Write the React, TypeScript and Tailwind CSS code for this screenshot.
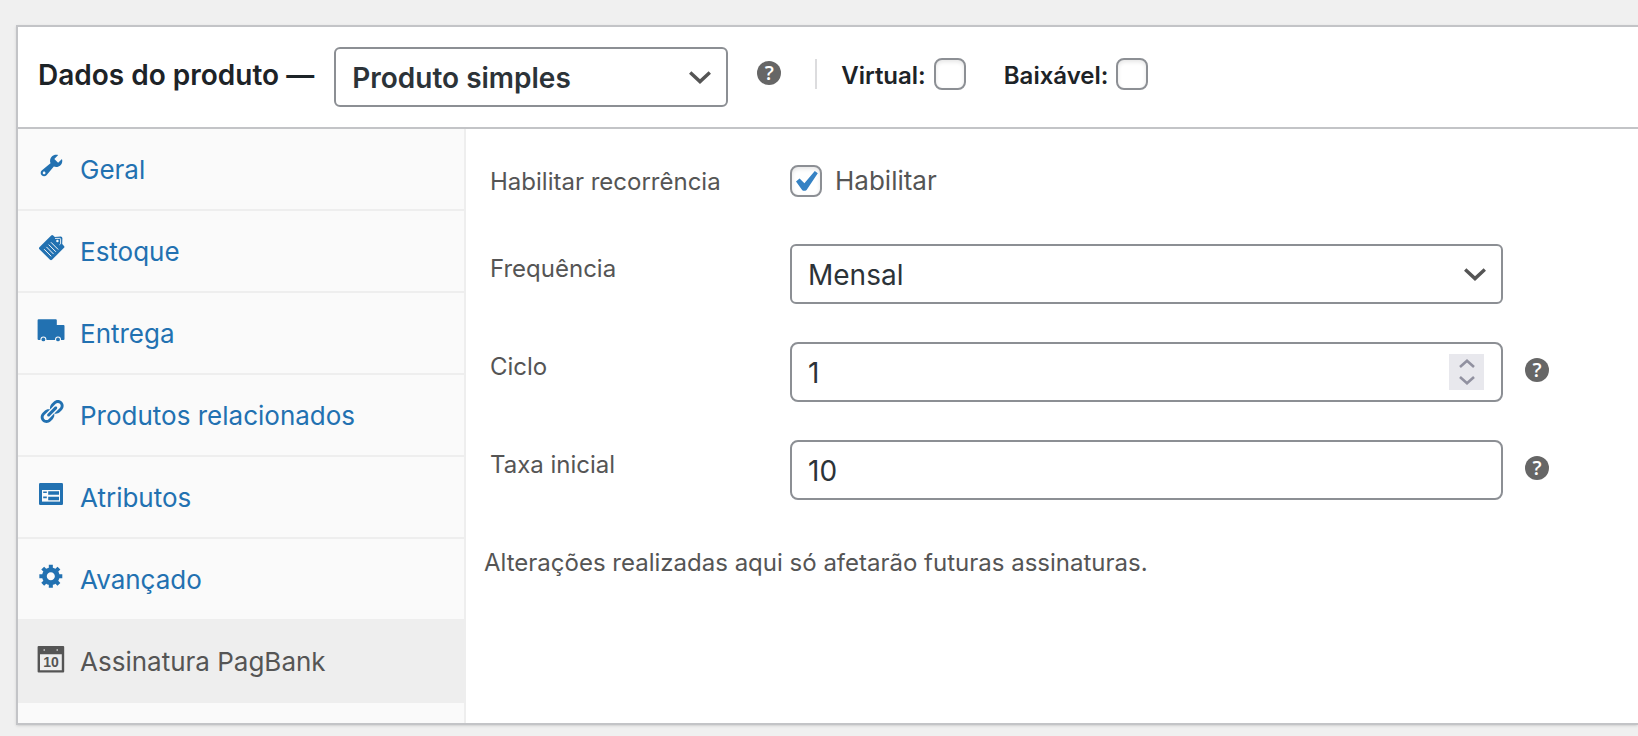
import React, { useState } from "react";

const icons: Record<string, React.ReactNode> = {
    wrench: (
        <path
            transform="scale(1.35)"
            d="M16.68 9.77c-1.34 1.34-3.3 1.67-4.95.99l-5.41 6.52c-.99.99-2.59.99-3.58 0s-.99-2.59 0-3.57l6.52-5.42c-.68-1.65-.35-3.61.99-4.95 1.28-1.28 3.12-1.62 4.72-1.06l-2.89 2.89 2.82 2.82 2.86-2.87c.53 1.58.18 3.39-1.08 4.65zM3.81 16.21c.4.39 1.04.39 1.43 0 .4-.4.4-1.04 0-1.43-.39-.4-1.03-.4-1.43 0-.39.39-.39 1.03 0 1.43z"
        />
    ),
    tag: (
        <>
            <path d="M1.4 13.2 13.2 1.4q1-.9 2 0l1.6 1.5L22.6 2.4q1.8 0 1.8 1.8l-.2 5.8 1.8 2q.9.9 0 1.8L14 25.8q-1 .9-2 0L1.4 15.2q-.9-1 0-2z" />
            <path d="M17 4.4h4.8q.8 0 .8.8v4.6l-1.2 1" fill="none" stroke="#fafafa" strokeWidth=".9" />
            <circle cx="19.4" cy="7" r="1.2" fill="#fafafa" />
            <path
                d="m13 8.3 7.2 7.2M10.7 10.6l7.2 7.2M8.4 12.9l7.2 7.2M6.1 15.2l7.2 7.2"
                fill="none"
                stroke="#fafafa"
                strokeWidth="1"
            />
        </>
    ),
    truck: (
        <>
            <path d="M-.4 4.2q0-1 1-1h17.2q1 0 1 1V9h6.8q.9 0 .9 1v13q0 1-1 1H.6q-1 0-1-1z" />
            <circle cx="5.4" cy="23.4" r="3" fill="#fafafa" />
            <circle cx="20" cy="23.4" r="3" fill="#fafafa" />
            <circle cx="5.4" cy="23.4" r="1.9" />
            <circle cx="20" cy="23.4" r="1.9" />
        </>
    ),
    link: (
        <path
            transform="scale(1.35)"
            d="M17.74 2.76c1.68 1.69 1.68 4.41 0 6.1l-1.53 1.52c-1.12 1.12-2.7 1.47-4.14 1.09l2.62-2.61.76-.77.76-.76c.84-.84.84-2.2 0-3.04-.84-.85-2.2-.85-3.04 0l-.77.76-3.38 3.38c-.37-1.44-.02-3.02 1.1-4.14l1.52-1.53c1.69-1.68 4.42-1.68 6.1 0zM8.59 13.43l5.34-5.34c.42-.42.42-1.1 0-1.52-.44-.43-1.13-.39-1.53 0l-5.33 5.34c-.42.42-.42 1.1 0 1.52.44.43 1.13.39 1.52 0zm-.76 2.29l4.14-4.15c.38 1.44.03 3.02-1.09 4.14l-1.52 1.53c-1.69 1.68-4.41 1.68-6.1 0-1.68-1.68-1.68-4.42 0-6.1l1.53-1.52c1.12-1.12 2.7-1.47 4.14-1.1l-4.14 4.15c-.85.84-.85 2.2 0 3.05.84.84 2.2.84 3.04 0z"
        />
    ),
    list: (
        <>
            <rect x="1" y="3" width="24" height="22" rx="1.2" />
            <rect x="4" y="10" width="18" height="11.6" fill="#fafafa" />
            <path d="M5.2 11.4h3.6v1.6H5.2zM5.2 16.6h3.6v1.6H5.2zM10.2 11.2h10.8v3.6H10.2zM10.2 16.8h10.8v3.4H10.2z" />
        </>
    ),
    gear: (
        <path
            transform="scale(1.35)"
            d="M18 12h-2.18c-.17.7-.44 1.35-.81 1.93l1.54 1.54-2.1 2.1-1.54-1.54c-.58.36-1.23.63-1.91.79V19H8v-2.18c-.68-.16-1.33-.43-1.91-.79l-1.54 1.54-2.12-2.12 1.54-1.54c-.36-.58-.63-1.23-.79-1.91H1V9.03h2.17c.16-.7.44-1.35.8-1.94L2.43 5.55l2.1-2.1 1.54 1.54c.58-.37 1.24-.64 1.93-.81V2h3v2.18c.68.16 1.33.43 1.91.79l1.54-1.54 2.12 2.12-1.54 1.54c.36.59.64 1.24.8 1.94H18V12zm-8.5 1.5c1.66 0 3-1.34 3-3s-1.34-3-3-3-3 1.34-3 3 1.34 3 3 3z"
        />
    ),
    calendar: (
        <>
            <path fillRule="evenodd" d="M-.4 3q0-1 1-1h24.6q1 0 1 1v24.4q0 1-1 1H.6q-1 0-1-1zM2 10.2v16h21.8v-16z" />
            <circle cx="6.2" cy="6" r=".8" fill="#eee" />
            <circle cx="19.2" cy="6" r=".8" fill="#eee" />
            <text x="13" y="23.2" textAnchor="middle" fontSize="14" fontWeight="700" fontFamily="Liberation Sans, sans-serif">
                10
            </text>
        </>
    ),
};

const tabs = [
    { label: "Geral", icon: "wrench" },
    { label: "Estoque", icon: "tag" },
    { label: "Entrega", icon: "truck" },
    { label: "Produtos relacionados", icon: "link" },
    { label: "Atributos", icon: "list" },
    { label: "Avançado", icon: "gear" },
    { label: "Assinatura PagBank", icon: "calendar" },
];

const fieldClass =
    "block w-full h-[60px] appearance-none border-2 border-[#8c8f94] bg-white px-4 pt-0.5 text-[28px] text-[#2c3338] [appearance:textfield] focus:outline-none focus:border-[#2271b1]";

function Help({ text }: { text: string }) {
    return (
        <button
            type="button"
            aria-label={text}
            className="flex items-center justify-center shrink-0 size-6 rounded-full bg-[#666] text-white text-xl leading-6 font-['Open_Sans',sans-serif] font-semibold"
        >
            ?
        </button>
    );
}

function Chevron() {
    return (
        <svg viewBox="0 0 22 13" className="absolute right-[17px] top-6 w-[22px] h-[13px] pointer-events-none" fill="none" stroke="#555" strokeWidth="3.4">
            <path d="M1.2 1.4 11 10.6l9.8-9.2" />
        </svg>
    );
}

function Checkbox({ id, checked, onChange }: { id: string; checked: boolean; onChange: (v: boolean) => void }) {
    return (
        <span className="relative block size-8 shrink-0">
            <input
                id={id}
                type="checkbox"
                checked={checked}
                onChange={(e) => onChange(e.target.checked)}
                className="block size-8 appearance-none rounded-lg border-2 border-[#8c8f94] bg-white shadow-[inset_0_2px_4px_rgba(0,0,0,0.1)]"
            />
            {checked && (
                <svg viewBox="0 0 32 32" className="absolute inset-0 pointer-events-none" fill="#3582c4">
                    <path d="m24.8 6 3 2.2L16.6 25q-.6.8-1.4.8h-1.8q-.8 0-1.3-.8L6 16.4 9.6 13.6l4.8 4.6z" />
                </svg>
            )}
        </span>
    );
}

function Field({ id, label, help, children }: { id: string; label: string; help?: string; children: React.ReactNode }) {
    return (
        <div className="flex items-start">
            <label htmlFor={id} className="w-[300px] shrink-0 pt-[9px] text-2xl">
                {label}
            </label>
            <div className="relative flex-1">{children}</div>
            <div className="w-6 ml-[22px] pt-4">{help && <Help text={help} />}</div>
        </div>
    );
}

export default function App() {
    const [active, setActive] = useState("Assinatura PagBank");
    const [type, setType] = useState("Produto simples");
    const [virtual, setVirtual] = useState(false);
    const [download, setDownload] = useState(false);
    const [enabled, setEnabled] = useState(true);
    const [frequency, setFrequency] = useState("Mensal");
    const [cycle, setCycle] = useState(1);
    const [fee, setFee] = useState("10");

    return (
        <div className="min-h-screen overflow-hidden bg-[#f0f0f0] pt-[25px] pl-4 font-[Inter,sans-serif] text-[#555]">
            <div className="border-2 border-r-0 border-[#c3c4c7] bg-white shadow-sm">
                <div className="flex items-center h-[102px] pl-5 border-b-2 border-[#c3c4c7] text-[#1d2327] font-semibold">
                    <h2 className="pb-1 text-[28px] whitespace-nowrap">
                        <label htmlFor="type">Dados do produto —</label>
                    </h2>
                    <div className="relative w-[394px] ml-5 shrink-0">
                        <select id="type" value={type} onChange={(e) => setType(e.target.value)} className={`${fieldClass} rounded-md`}>
                            <option>Produto simples</option>
                            <option>Produto agrupado</option>
                            <option>Produto variável</option>
                        </select>
                        <Chevron />
                    </div>
                    <div className="ml-[29px] mb-2">
                        <Help text="Tipo do produto" />
                    </div>
                    <div className="flex items-center mb-1.5 ml-[34px] text-2xl">
                        <span className="w-0.5 h-[30px] mr-6 bg-[#dcdcde]" />
                        <label htmlFor="virtual" className="pt-1 mr-2">Virtual:</label>
                        <Checkbox id="virtual" checked={virtual} onChange={setVirtual} />
                        <label htmlFor="download" className="pt-1 ml-[38px] mr-2">Baixável:</label>
                        <Checkbox id="download" checked={download} onChange={setDownload} />
                    </div>
                </div>

                <div className="flex">
                    <ul className="w-[448px] shrink-0 pb-5 border-r-2 border-[#eee] bg-[#fafafa]">
                        {tabs.map((tab) => (
                            <li key={tab.label}>
                                <a
                                    href="#"
                                    onClick={(e) => {
                                        e.preventDefault();
                                        setActive(tab.label);
                                    }}
                                    className={`flex items-center h-[82px] pl-5 gap-3.5 border-b-2 border-[#eee] text-[26px] ${
                                        active === tab.label ? "bg-[#eee] text-[#555]" : "text-[#2271b1]"
                                    }`}
                                >
                                    <svg viewBox="0 0 28 28" className="size-7 mb-1.5 overflow-visible" fill="currentColor">
                                        {icons[tab.icon]}
                                    </svg>
                                    {tab.label}
                                </a>
                            </li>
                        ))}
                    </ul>

                    <form className="flex-1 pt-[35px] pl-6 pr-[89px]" onSubmit={(e) => e.preventDefault()}>
                        <div className="flex items-center mb-[45px] text-2xl">
                            <label htmlFor="enabled" className="w-[300px] shrink-0 pt-0.5">Habilitar recorrência</label>
                            <Checkbox id="enabled" checked={enabled} onChange={setEnabled} />
                            <label htmlFor="enabled" className="ml-[13px] text-[26px]">Habilitar</label>
                        </div>
                        <div className="flex flex-col gap-[38px]">
                            <Field id="frequency" label="Frequência">
                                <select id="frequency" value={frequency} onChange={(e) => setFrequency(e.target.value)} className={`${fieldClass} rounded-md`}>
                                    <option>Semanal</option>
                                    <option>Mensal</option>
                                    <option>Anual</option>
                                </select>
                                <Chevron />
                            </Field>
                            <Field id="cycle" label="Ciclo" help="Intervalo entre as cobranças">
                                <input
                                    id="cycle"
                                    type="number"
                                    value={cycle}
                                    onChange={(e) => setCycle(Number(e.target.value))}
                                    className={`${fieldClass} rounded-lg`}
                                />
                                <div className="absolute flex flex-col right-[19px] top-3 w-[35px] h-9 bg-[#e8e8ed]">
                                    <button type="button" aria-label="Aumentar" onClick={() => setCycle(cycle + 1)} className="flex items-end justify-center flex-1 pb-1">
                                        <svg viewBox="0 0 16 9" className="w-4 h-[9px]" fill="none" stroke="#9191a0" strokeWidth="2.6">
                                            <path d="m1 8 7-6.2L15 8" />
                                        </svg>
                                    </button>
                                    <button type="button" aria-label="Diminuir" onClick={() => setCycle(cycle - 1)} className="flex items-start justify-center flex-1 pt-1">
                                        <svg viewBox="0 0 16 9" className="w-4 h-[9px]" fill="none" stroke="#9191a0" strokeWidth="2.6">
                                            <path d="m1 1 7 6.2L15 1" />
                                        </svg>
                                    </button>
                                </div>
                            </Field>
                            <Field id="fee" label="Taxa inicial" help="Valor cobrado na primeira fatura">
                                <input id="fee" type="text" value={fee} onChange={(e) => setFee(e.target.value)} className={`${fieldClass} rounded-lg`} />
                            </Field>
                        </div>
                        <p className="mt-[47px] -ml-1.5 text-2xl">Alterações realizadas aqui só afetarão futuras assinaturas.</p>
                    </form>
                </div>
            </div>
        </div>
    );
}
